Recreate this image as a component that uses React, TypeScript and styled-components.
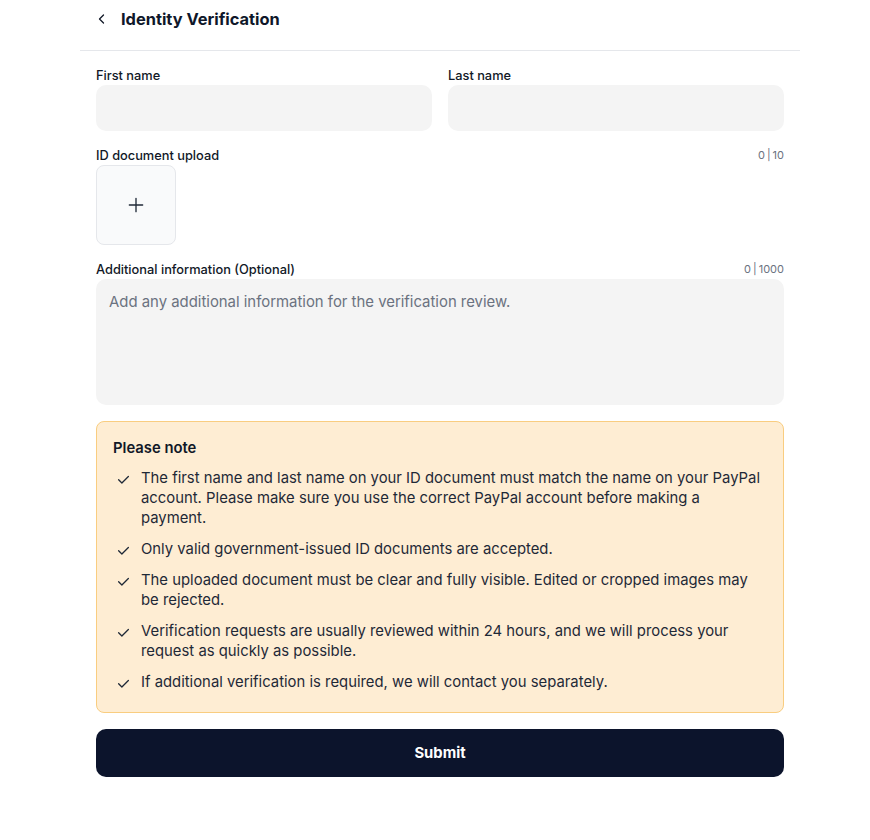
import React from 'react'
import styled, { createGlobalStyle } from 'styled-components'

const GlobalStyle = createGlobalStyle`
  * {
    box-sizing: border-box;
  }
  body {
    margin: 0;
    padding-left: 10px;
    background: #fff;
    font-family: Inter, 'Open Sans', 'Liberation Sans', sans-serif;
    color: #111827;
  }
`

const Page = styled.div`
  width: 720px;
  margin: 0 auto;
`

const Header = styled.header`
  display: flex;
  align-items: center;
  gap: 13px;
  height: 51px;
  padding: 0 16px 12px;
  border-bottom: 1px solid #e5e7eb;
`

const BackButton = styled.button`
  display: flex;
  align-items: center;
  justify-content: center;
  width: 12px;
  height: 24px;
  padding: 0;
  border: 0;
  background: none;
  color: #111827;
  cursor: pointer;
`

const Title = styled.h1`
  margin: 0;
  font-size: 16.4px;
  font-weight: 700;
  color: #0f172a;
`

const Form = styled.form`
  display: flex;
  flex-direction: column;
  padding: 16px 16px 0;
`

const Row = styled.div`
  display: grid;
  grid-template-columns: 1fr 1fr;
  gap: 16px;
`

const Field = styled.div`
  display: flex;
  flex-direction: column;
  margin-bottom: 16px;
`

const LabelRow = styled.div`
  display: flex;
  align-items: center;
  justify-content: space-between;
  height: 16px;
  margin-bottom: 2px;
`

const Label = styled.label`
  font-size: 12.8px;
  font-weight: 500;
  color: #111827;
`

const Counter = styled.span`
  font-size: 11px;
  color: #6b7280;
`

const Input = styled.input`
  height: 46px;
  padding: 0 13px;
  border: 0;
  border-radius: 10px;
  background: #f4f4f4;
  font: inherit;
  font-size: 14.8px;
  outline: none;
`

const UploadTile = styled.button`
  display: flex;
  align-items: center;
  justify-content: center;
  width: 80px;
  height: 80px;
  border: 1px solid #e5e7eb;
  border-radius: 8px;
  background: #f9fafb;
  color: #1f2937;
  cursor: pointer;
`

const TextArea = styled.textarea`
  height: 126px;
  padding: 13px 13px;
  border: 0;
  border-radius: 10px;
  background: #f4f4f4;
  font: inherit;
  font-size: 14.9px;
  line-height: 20px;
  color: #111827;
  resize: none;
  outline: none;

  &::placeholder {
    color: #6b7280;
  }
`

const Notice = styled.div`
  margin-bottom: 16px;
  padding: 16px 16px 20px;
  border: 1px solid #f9cd80;
  border-radius: 8px;
  background: #feedd3;
`

const NoticeTitle = styled.div`
  margin-bottom: 10px;
  font-size: 14.8px;
  font-weight: 600;
  line-height: 20px;
`

const NoteList = styled.ul`
  display: flex;
  flex-direction: column;
  gap: 11px;
  margin: 0;
  padding: 0;
  list-style: none;
`

const NoteItem = styled.li`
  display: flex;
  gap: 11px;
  padding-left: 4px;
  font-size: 14.85px;
  line-height: 20px;
  color: #1f2937;
`

const CheckMark = styled.span`
  flex: none;
  display: flex;
  align-items: center;
  height: 20px;
  padding-top: 3px;
`

const SubmitButton = styled.button`
  height: 48px;
  border: 0;
  border-radius: 10px;
  background: #0c142c;
  color: #fff;
  font: inherit;
  font-size: 14.8px;
  font-weight: 700;
  cursor: pointer;
`

const notes = [
  'The first name and last name on your ID document must match the name on your PayPal account. Please make sure you use the correct PayPal account before making a payment.',
  'Only valid government-issued ID documents are accepted.',
  'The uploaded document must be clear and fully visible. Edited or cropped images may be rejected.',
  'Verification requests are usually reviewed within 24 hours, and we will process your request as quickly as possible.',
  'If additional verification is required, we will contact you separately.',
]

const Check = () => (
  <svg width='13' height='13' viewBox='0 0 24 24' fill='none' stroke='currentColor' strokeWidth='2.4' strokeLinecap='round' strokeLinejoin='round'>
    <path d='M3 12.5l6 6L21 6.5' />
  </svg>
)

const App: React.FC = () => {
  return (
    <>
      <GlobalStyle />
      <Page>
        <Header>
          <BackButton aria-label='Back'>
            <svg width='12' height='12' viewBox='0 0 24 24' fill='none' stroke='currentColor' strokeWidth='2.6' strokeLinecap='round' strokeLinejoin='round'>
              <path d='M15 4l-8 8 8 8' />
            </svg>
          </BackButton>
          <Title>Identity Verification</Title>
        </Header>
        <Form onSubmit={(e) => e.preventDefault()}>
          <Row>
            <Field>
              <LabelRow>
                <Label>First name</Label>
              </LabelRow>
              <Input />
            </Field>
            <Field>
              <LabelRow>
                <Label>Last name</Label>
              </LabelRow>
              <Input />
            </Field>
          </Row>
          <Field>
            <LabelRow>
              <Label>ID document upload</Label>
              <Counter>0&thinsp;|&thinsp;10</Counter>
            </LabelRow>
            <UploadTile type='button' aria-label='Upload'>
              <svg width='20' height='20' viewBox='0 0 24 24' fill='none' stroke='currentColor' strokeWidth='1.6' strokeLinecap='round'>
                <path d='M12 4v16M4 12h16' />
              </svg>
            </UploadTile>
          </Field>
          <Field>
            <LabelRow>
              <Label>Additional information (Optional)</Label>
              <Counter>0&thinsp;|&thinsp;1000</Counter>
            </LabelRow>
            <TextArea placeholder='Add any additional information for the verification review.' />
          </Field>
          <Notice>
            <NoticeTitle>Please note</NoticeTitle>
            <NoteList>
              {notes.map((n) => (
                <NoteItem key={n}>
                  <CheckMark>
                    <Check />
                  </CheckMark>
                  <span>{n}</span>
                </NoteItem>
              ))}
            </NoteList>
          </Notice>
          <SubmitButton type='submit'>Submit</SubmitButton>
        </Form>
      </Page>
    </>
  )
}

export default App
